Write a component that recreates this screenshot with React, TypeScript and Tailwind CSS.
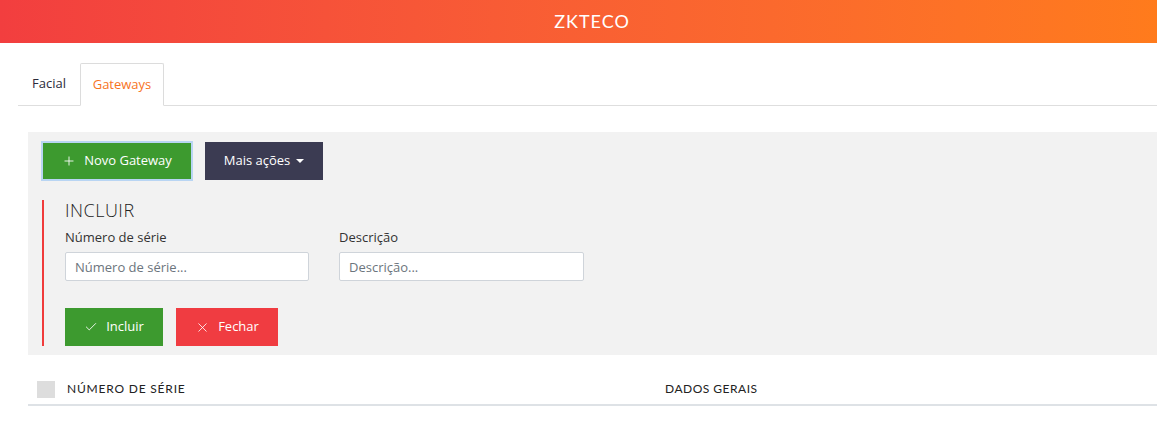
import { Plus, Check, X } from 'lucide-react';

const App = () => {
  return (
    <div className="w-[1157px] h-[433px] bg-white overflow-hidden font-['Open_Sans',sans-serif] text-[#222]">
      <header className="h-[43px] flex items-center justify-center pl-[27px] bg-gradient-to-r from-[#f23e3f] to-[#ff7b1c]">
        <span className="text-white text-[18px] tracking-[1px] font-['Lato',sans-serif]">ZKTECO</span>
      </header>

      <div className="mt-[20px] ml-[18px] flex border-b border-[#dedede] h-[43px]">
        <div className="w-[62px] flex items-center justify-center text-[13px] text-[#2b2b3a]">Facial</div>
        <div className="w-[84px] flex items-center justify-center text-[13px] text-[#f7731e] bg-white border border-[#dcdcdc] border-b-white -mb-px rounded-t-[2px]">
          Gateways
        </div>
      </div>

      <div className="mt-[26px] ml-[28px] bg-[#f2f2f2] pt-[10px] pb-[10px] pl-[14px] h-[223px]">
        <div className="flex gap-[13px]">
          <button
            type="button"
            className="h-[38px] w-[150px] bg-[#3d9a2f] text-white text-[13px] flex items-center justify-center gap-[8px] outline outline-2 outline-[#b9d5f3] -outline-offset-1"
          >
            <Plus size={14} strokeWidth={1.5} />
            Novo Gateway
          </button>
          <button
            type="button"
            className="h-[38px] w-[118px] bg-[#3b3b52] text-white text-[13px] flex items-center justify-center gap-[6px]"
          >
            Mais ações
            <span className="w-0 h-0 border-l-[4px] border-r-[4px] border-t-[4px] border-l-transparent border-r-transparent border-t-white" />
          </button>
        </div>

        <div className="mt-[20px] border-l-2 border-[#f03c3c] pl-[21px] h-[146px]">
          <div className="text-[18px] font-light tracking-[0.5px] leading-[20px] text-[#222]">INCLUIR</div>
          <div className="mt-[8px] flex gap-[30px]">
            <div className="w-[244px]">
              <label className="block text-[13px] text-[#333] leading-[18px]">Número de série</label>
              <input
                placeholder="Número de série..."
                className="mt-[6px] w-full h-[29px] bg-white border border-[#cfd4da] rounded-[2px] px-[9px] text-[13px] placeholder:text-[#6c757d]"
              />
            </div>
            <div className="w-[245px]">
              <label className="block text-[13px] text-[#333] leading-[18px]">Descrição</label>
              <input
                placeholder="Descrição..."
                className="mt-[6px] w-full h-[29px] bg-white border border-[#cfd4da] rounded-[2px] px-[9px] text-[13px] placeholder:text-[#6c757d]"
              />
            </div>
          </div>
          <div className="mt-[27px] flex gap-[13px]">
            <button
              type="button"
              className="h-[38px] w-[98px] bg-[#3d9a2f] text-white text-[13px] flex items-center justify-center gap-[8px]"
            >
              <Check size={14} strokeWidth={1.5} />
              Incluir
            </button>
            <button
              type="button"
              className="h-[38px] w-[102px] bg-[#f03c41] text-white text-[13px] flex items-center justify-center gap-[8px]"
            >
              <X size={15} strokeWidth={1.3} />
              Fechar
            </button>
          </div>
        </div>
      </div>

      <div className="mt-[19px] ml-[28px] border-b-2 border-[#dee2e6] h-[32px] flex items-center font-['Lato',sans-serif]">
        <div className="w-[18px] ml-[9px] h-[17px] bg-[#dddddd]" />
        <div className="ml-[12px] w-[598px] text-[12px] text-[#222] tracking-[0.8px]">NÚMERO DE SÉRIE</div>
        <div className="text-[12px] text-[#222] tracking-[0.5px]">DADOS GERAIS</div>
      </div>
    </div>
  );
};

export default App;
